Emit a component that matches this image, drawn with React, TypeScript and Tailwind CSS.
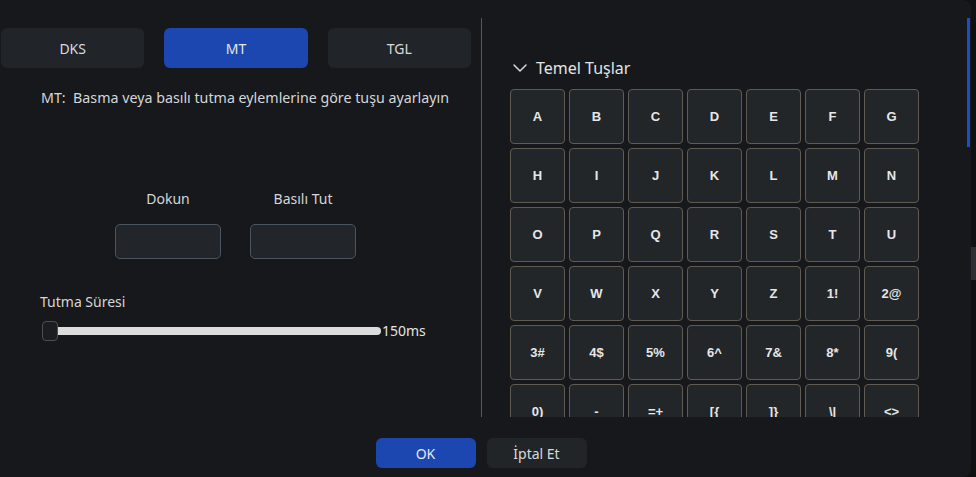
import { ChevronDown } from "lucide-react";

const keyRows = [
  ["A", "B", "C", "D", "E", "F", "G"],
  ["H", "I", "J", "K", "L", "M", "N"],
  ["O", "P", "Q", "R", "S", "T", "U"],
  ["V", "W", "X", "Y", "Z", "1!", "2@"],
  ["3#", "4$", "5%", "6^", "7&", "8*", "9("],
  ["0)", "-", "=+", "[{", "]}", "\\|", "<>"],
];

const ui = { fontFamily: '"Noto Sans", "Open Sans", Arial, sans-serif' };
const keyFont = { fontFamily: '"Liberation Sans", Arial, sans-serif' };

function ModeTabs() {
  const tabs = ["DKS", "MT", "TGL"];
  return (
    <div className="ml-[1px] grid w-[470px] grid-cols-3 gap-[20px] pt-[10px]">
      {tabs.map((t) => (
        <button
          key={t}
          className={
            t === "MT"
              ? "h-[40px] rounded-md bg-[#1c47b1] text-[14px] text-[#e4e6ea]"
              : "h-[40px] rounded-md bg-[#212428] text-[14px] text-[#d8dadd]"
          }
        >
          {t}
        </button>
      ))}
    </div>
  );
}

function LeftPane() {
  return (
    <div className="flex w-[471px] flex-col">
      <ModeTabs />
      <p className="ml-[41px] mt-[20px] text-[14.25px] leading-[20px] text-[#d4d6d9]">
        MT:&nbsp;&nbsp;Basma veya basılı tutma eylemlerine göre tuşu ayarlayın
      </p>

      <div className="mt-[81px] flex justify-center gap-[29px]">
        {["Dokun", "Basılı Tut"].map((l) => (
          <div key={l} className="flex w-[106px] flex-col items-center">
            <span className="text-[14px] leading-[20px] text-[#d4d6d9]">{l}</span>
            <div className="mt-[15px] h-[35px] w-[106px] rounded-[5px] border border-[#4a5561] bg-[#22262a]" />
          </div>
        ))}
      </div>

      <div className="ml-[40px] mt-[33px] text-[14px] leading-[20px] text-[#d4d6d9]">Tutma Süresi</div>
      <div className="ml-[42px] mt-[9px] flex items-center">
        <div className="z-10 h-[20px] w-[16px] rounded-[4px] border border-[#4b4f55] bg-[#1b1d20]" />
        <div className="-ml-[1px] h-[8px] w-[324px] rounded-r-full bg-[#dcdcdc]" />
        <span className="ml-[1px] text-[14px] leading-[20px] text-[#e2e4e6]">150ms</span>
      </div>
    </div>
  );
}

function KeyGrid() {
  return (
    <div className="flex flex-1 flex-col overflow-hidden pl-[26px] pt-[38px]">
      <div className="flex items-center">
        <ChevronDown size={24} strokeWidth={1.5} className="text-[#d8dadd]" />
        <span className="ml-[4px] text-[16px] leading-[22px] text-[#e2e4e6]">Temel Tuşlar</span>
      </div>
      <div className="ml-[2px] mt-[9px] grid w-[409px] grid-cols-7 gap-[4px]" style={keyFont}>
        {keyRows.flat().map((k, i) => (
          <div
            key={i}
            className="flex h-[55px] w-[55px] items-center justify-center rounded-[4px] border border-[#5f5b52] bg-[#222629] text-[13px] font-bold text-[#e6e7e9]"
          >
            {k}
          </div>
        ))}
      </div>
    </div>
  );
}

export default function App() {
  return (
    <div className="flex h-[477px] w-[976px] bg-[#0f1012]" style={ui}>
      <div className="flex w-[971px] flex-col rounded-r-lg bg-[#17181b]">
        <div className="mt-[18px] flex h-[399px]">
          <LeftPane />
          <div className="ml-[10px] w-[1px] bg-[#55575a]" />
          <KeyGrid />
          <div className="ml-auto mr-[1px] w-[3px]">
            <div className="h-[129px] w-[3px] bg-[#1d4fc4]" />
          </div>
        </div>
        <div className="flex flex-1 items-start justify-center gap-[11px] pr-[9px] pt-[21px]">
          <button className="h-[30px] w-[100px] rounded-md bg-[#1c47b1] text-[14px] text-[#e4e6ea]">OK</button>
          <button className="h-[30px] w-[100px] rounded-md bg-[#222528] text-[14px] text-[#d8dadd]">İptal Et</button>
        </div>
      </div>
      <div className="w-[5px]">
        <div className="mt-[247px] h-[33px] w-[5px] bg-[#2b2e34]" />
      </div>
    </div>
  );
}
